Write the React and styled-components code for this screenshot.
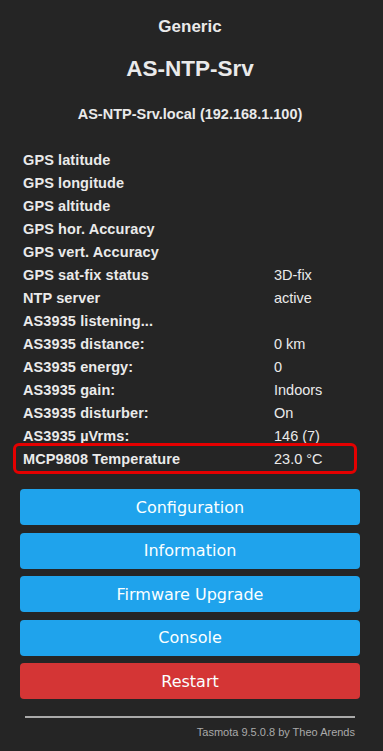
import React from "react"
import styled, { createGlobalStyle } from "styled-components"

const Global = createGlobalStyle`
  html, body { margin: 0; padding: 0; background: #252525; }
  body { font-family: "Liberation Sans", Arial, sans-serif; color: #eaeaea; }
`

const Page = styled.div`
  width: 383px;
  min-height: 751px;
  box-sizing: border-box;
  padding: 15px 23px 0 20px;
`

const Head = styled.div`
  text-align: center;
  font-weight: bold;
`

const Module = styled.h3`
  margin: 0;
  font-size: 17px;
  line-height: 24px;
`

const Device = styled.h2`
  margin: 16px 0 0;
  font-size: 22.5px;
  line-height: 28px;
`

const Host = styled.h4`
  margin: 22px 0 0;
  font-size: 14.5px;
  line-height: 18px;
`

const Table = styled.div`
  margin-top: 25px;
  display: flex;
  flex-direction: column;
`

const Row = styled.div`
  position: relative;
  display: grid;
  grid-template-columns: 251px 1fr;
  height: 23px;
  align-items: center;
  padding-left: 3px;
  font-size: 14.5px;

  ${p => p.$mark && `
    &::after {
      content: "";
      position: absolute;
      left: -7px;
      right: 3px;
      top: -4px;
      bottom: -4px;
      border: 3px solid #e40000;
      border-radius: 6px;
    }
  `}
`

const Label = styled.span`
  font-weight: bold;
  letter-spacing: 0.1px;
`

const Value = styled.span`
  font-weight: normal;
`

const Buttons = styled.div`
  margin-top: 19px;
  display: flex;
  flex-direction: column;
  gap: 7.5px;
`

const Button = styled.button`
  display: block;
  width: 100%;
  height: 36px;
  border: 0;
  border-radius: 4px;
  background: ${p => (p.$danger ? "#d43535" : "#1fa3ec")};
  color: #faffff;
  font-family: "DejaVu Sans", Verdana, sans-serif;
  font-size: 16px;
  cursor: pointer;
`

const Footer = styled.div`
  margin: 17px 5px 0;
  border-top: 2px solid #aaa;
  padding-top: 8px;
  text-align: right;
  font-size: 11px;
  color: #aaa;
`

const rows = [
  ["GPS latitude", ""],
  ["GPS longitude", ""],
  ["GPS altitude", ""],
  ["GPS hor. Accuracy", ""],
  ["GPS vert. Accuracy", ""],
  ["GPS sat-fix status", "3D-fix"],
  ["NTP server", "active"],
  ["AS3935 listening...", ""],
  ["AS3935 distance:", "0 km"],
  ["AS3935 energy:", "0"],
  ["AS3935 gain:", "Indoors"],
  ["AS3935 disturber:", "On"],
  ["AS3935 µVrms:", "146 (7)"],
]

export default function App() {
  return (
    <Page>
      <Global />
      <Head>
        <Module>Generic</Module>
        <Device>AS-NTP-Srv</Device>
        <Host>AS-NTP-Srv.local (192.168.1.100)</Host>
      </Head>
      <Table>
        {rows.map(([k, v]) => (
          <Row key={k}>
            <Label>{k}</Label>
            <Value>{v}</Value>
          </Row>
        ))}
        <Row $mark>
          <Label>MCP9808 Temperature</Label>
          <Value>23.0 °C</Value>
        </Row>
      </Table>
      <Buttons>
        <Button>Configuration</Button>
        <Button>Information</Button>
        <Button>Firmware Upgrade</Button>
        <Button>Console</Button>
        <Button $danger>Restart</Button>
      </Buttons>
      <Footer>Tasmota 9.5.0.8 by Theo Arends</Footer>
    </Page>
  )
}
